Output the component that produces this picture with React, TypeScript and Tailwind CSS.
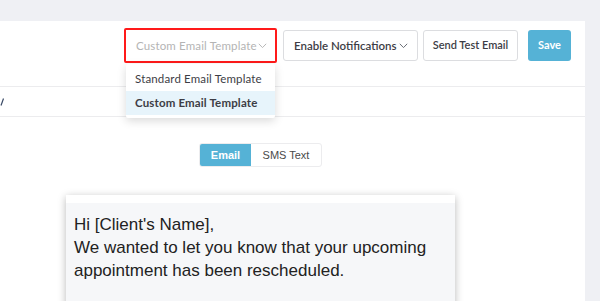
import React from "react";

const ui = { fontFamily: "Lato, 'Open Sans', sans-serif" };
const arial = { fontFamily: "'Liberation Sans', Arial, sans-serif" };

function Chevron({ color = "#9aa0a6" }: { color?: string }) {
  return (
    <svg width="9" height="6" viewBox="0 0 9 6" fill="none">
      <path d="M0.8 0.8L4.5 4.6L8.2 0.8" stroke={color} strokeWidth="1" />
    </svg>
  );
}

export default function App() {
  return (
    <div className="h-[301px] w-[600px] overflow-hidden bg-[#eff0f4] pt-[21px] pr-[15px] whitespace-nowrap" style={ui}>
      <div className="relative h-full bg-white">
        {/* toolbar */}
        <div className="flex h-[66px] items-start justify-end border-b border-[#ececee] pr-[14px] pt-[9px]">
          <div className="relative mr-[8px] h-[31px] w-[149px]">
            <div className="absolute -inset-[2px] rounded-[2px] border-2 border-[#ff1a1a]" />
            <div className="flex h-full items-center justify-between pl-[10px] pr-[8px] text-[11.5px] text-[#b4b4b4]">
              <span className="tracking-[0.15px]">Custom Email Template</span>
              <Chevron color="#b8b8b8" />
            </div>
          </div>
          <button className="mr-[5px] flex h-[31px] w-[135px] items-center justify-between rounded-[3px] border border-[#dcdde0] pl-[10px] pr-[9px] text-[11.5px] font-semibold text-[#3d3d45]">
            <span>Enable Notifications</span>
            <Chevron color="#6b6f76" />
          </button>
          <button className="mr-[10px] flex h-[31px] w-[95px] items-center justify-center rounded-[3px] border border-[#dcdde0] text-[11px] font-semibold text-[#3d3d45]">
            Send Test Email
          </button>
          <button className="flex h-[31px] w-[43px] items-center justify-center rounded-[3px] bg-[#55b2d6] text-[11px] font-bold text-white">
            Save
          </button>
        </div>

        {/* second row */}
        <div className="flex h-[30px] items-center border-b border-[#ececee]">
          <svg width="4" height="8" viewBox="0 0 4 8" className="ml-0">
            <path d="M3.5 0.5L1 7.5" stroke="#3a4a66" strokeWidth="1.2" />
          </svg>
        </div>

        {/* tabs */}
        <div className="ml-[199px] mt-[26px] flex h-[24px] w-[123px] overflow-hidden rounded-[3px] border border-[#ececee] text-[11px]" style={arial}>
          <div className="flex w-[51px] items-center justify-center bg-[#55b2d6] font-semibold text-white">Email</div>
          <div className="flex flex-1 items-center justify-center text-[#4a4a4a]">SMS Text</div>
        </div>

        {/* email card */}
        <div className="ml-[66px] mt-[28px] w-[389px] bg-white pt-[8px] shadow-[0_2px_8px_rgba(0,0,0,0.28)]">
          <div className="h-[120px] bg-[#f6f7f9] px-[8px] pt-[10px] text-[17px] leading-[23px] text-[#222]" style={arial}>
            <div>Hi [Client's Name],</div>
            <div>We wanted to let you know that your upcoming</div>
            <div>appointment has been rescheduled.</div>
          </div>
        </div>

        {/* dropdown menu */}
        <div className="absolute left-[126px] top-[43px] w-[149px] rounded-[2px] bg-white py-[3px] text-[11.5px] text-[#3d3d45] shadow-[0_3px_10px_rgba(0,0,0,0.15)]">
          <div className="flex h-[24px] items-center px-[9px] tracking-[0.15px]">Standard Email Template</div>
          <div className="flex h-[24px] items-center bg-[#e7f4fb] px-[9px] font-bold tracking-[0.15px]">Custom Email Template</div>
        </div>
      </div>
    </div>
  );
}
